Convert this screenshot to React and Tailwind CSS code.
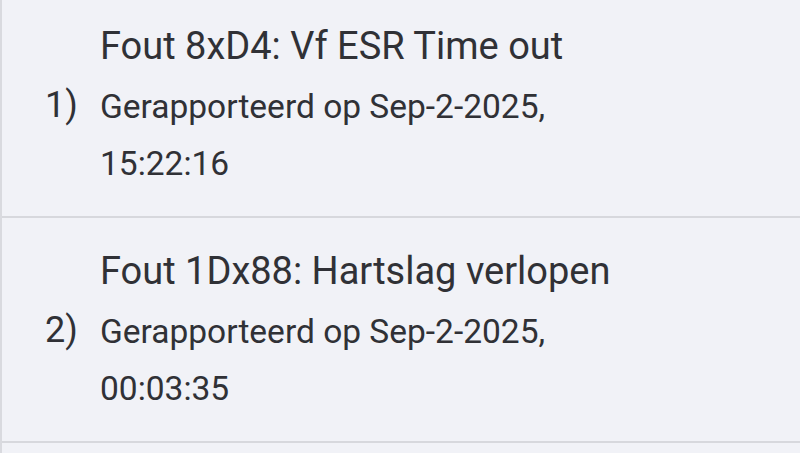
import React from 'react';

const faults = [
  { n: 1, title: 'Fout 8xD4: Vf ESR Time out', date: 'Gerapporteerd op Sep-2-2025,', time: '15:22:16' },
  { n: 2, title: 'Fout 1Dx88: Hartslag verlopen', date: 'Gerapporteerd op Sep-2-2025,', time: '00:03:35' },
];

export default function App() {
  return (
    <div className="h-[453px] w-[800px] overflow-hidden bg-[#f1f2f7] border-l-2 border-[#d9dadf] font-['Roboto',sans-serif] text-[#303136]">
      <div className="-mt-[7px]">
        {faults.map((f) => (
          <div key={f.n} className="flex items-start h-[225px] pt-[33px] border-b-2 border-[#d7d8dd]">
            <div className="w-[98px] pl-[43px] mt-[61px] text-[36px] leading-none">{f.n})</div>
            <div className="flex flex-col">
              <div className="text-[38px] leading-[40px]">{f.title}</div>
              <div className="text-[33.5px] leading-[57px] mt-[12px]">{f.date}</div>
              <div className="text-[33.5px] leading-[57px]">{f.time}</div>
            </div>
          </div>
        ))}
      </div>
    </div>
  );
}
